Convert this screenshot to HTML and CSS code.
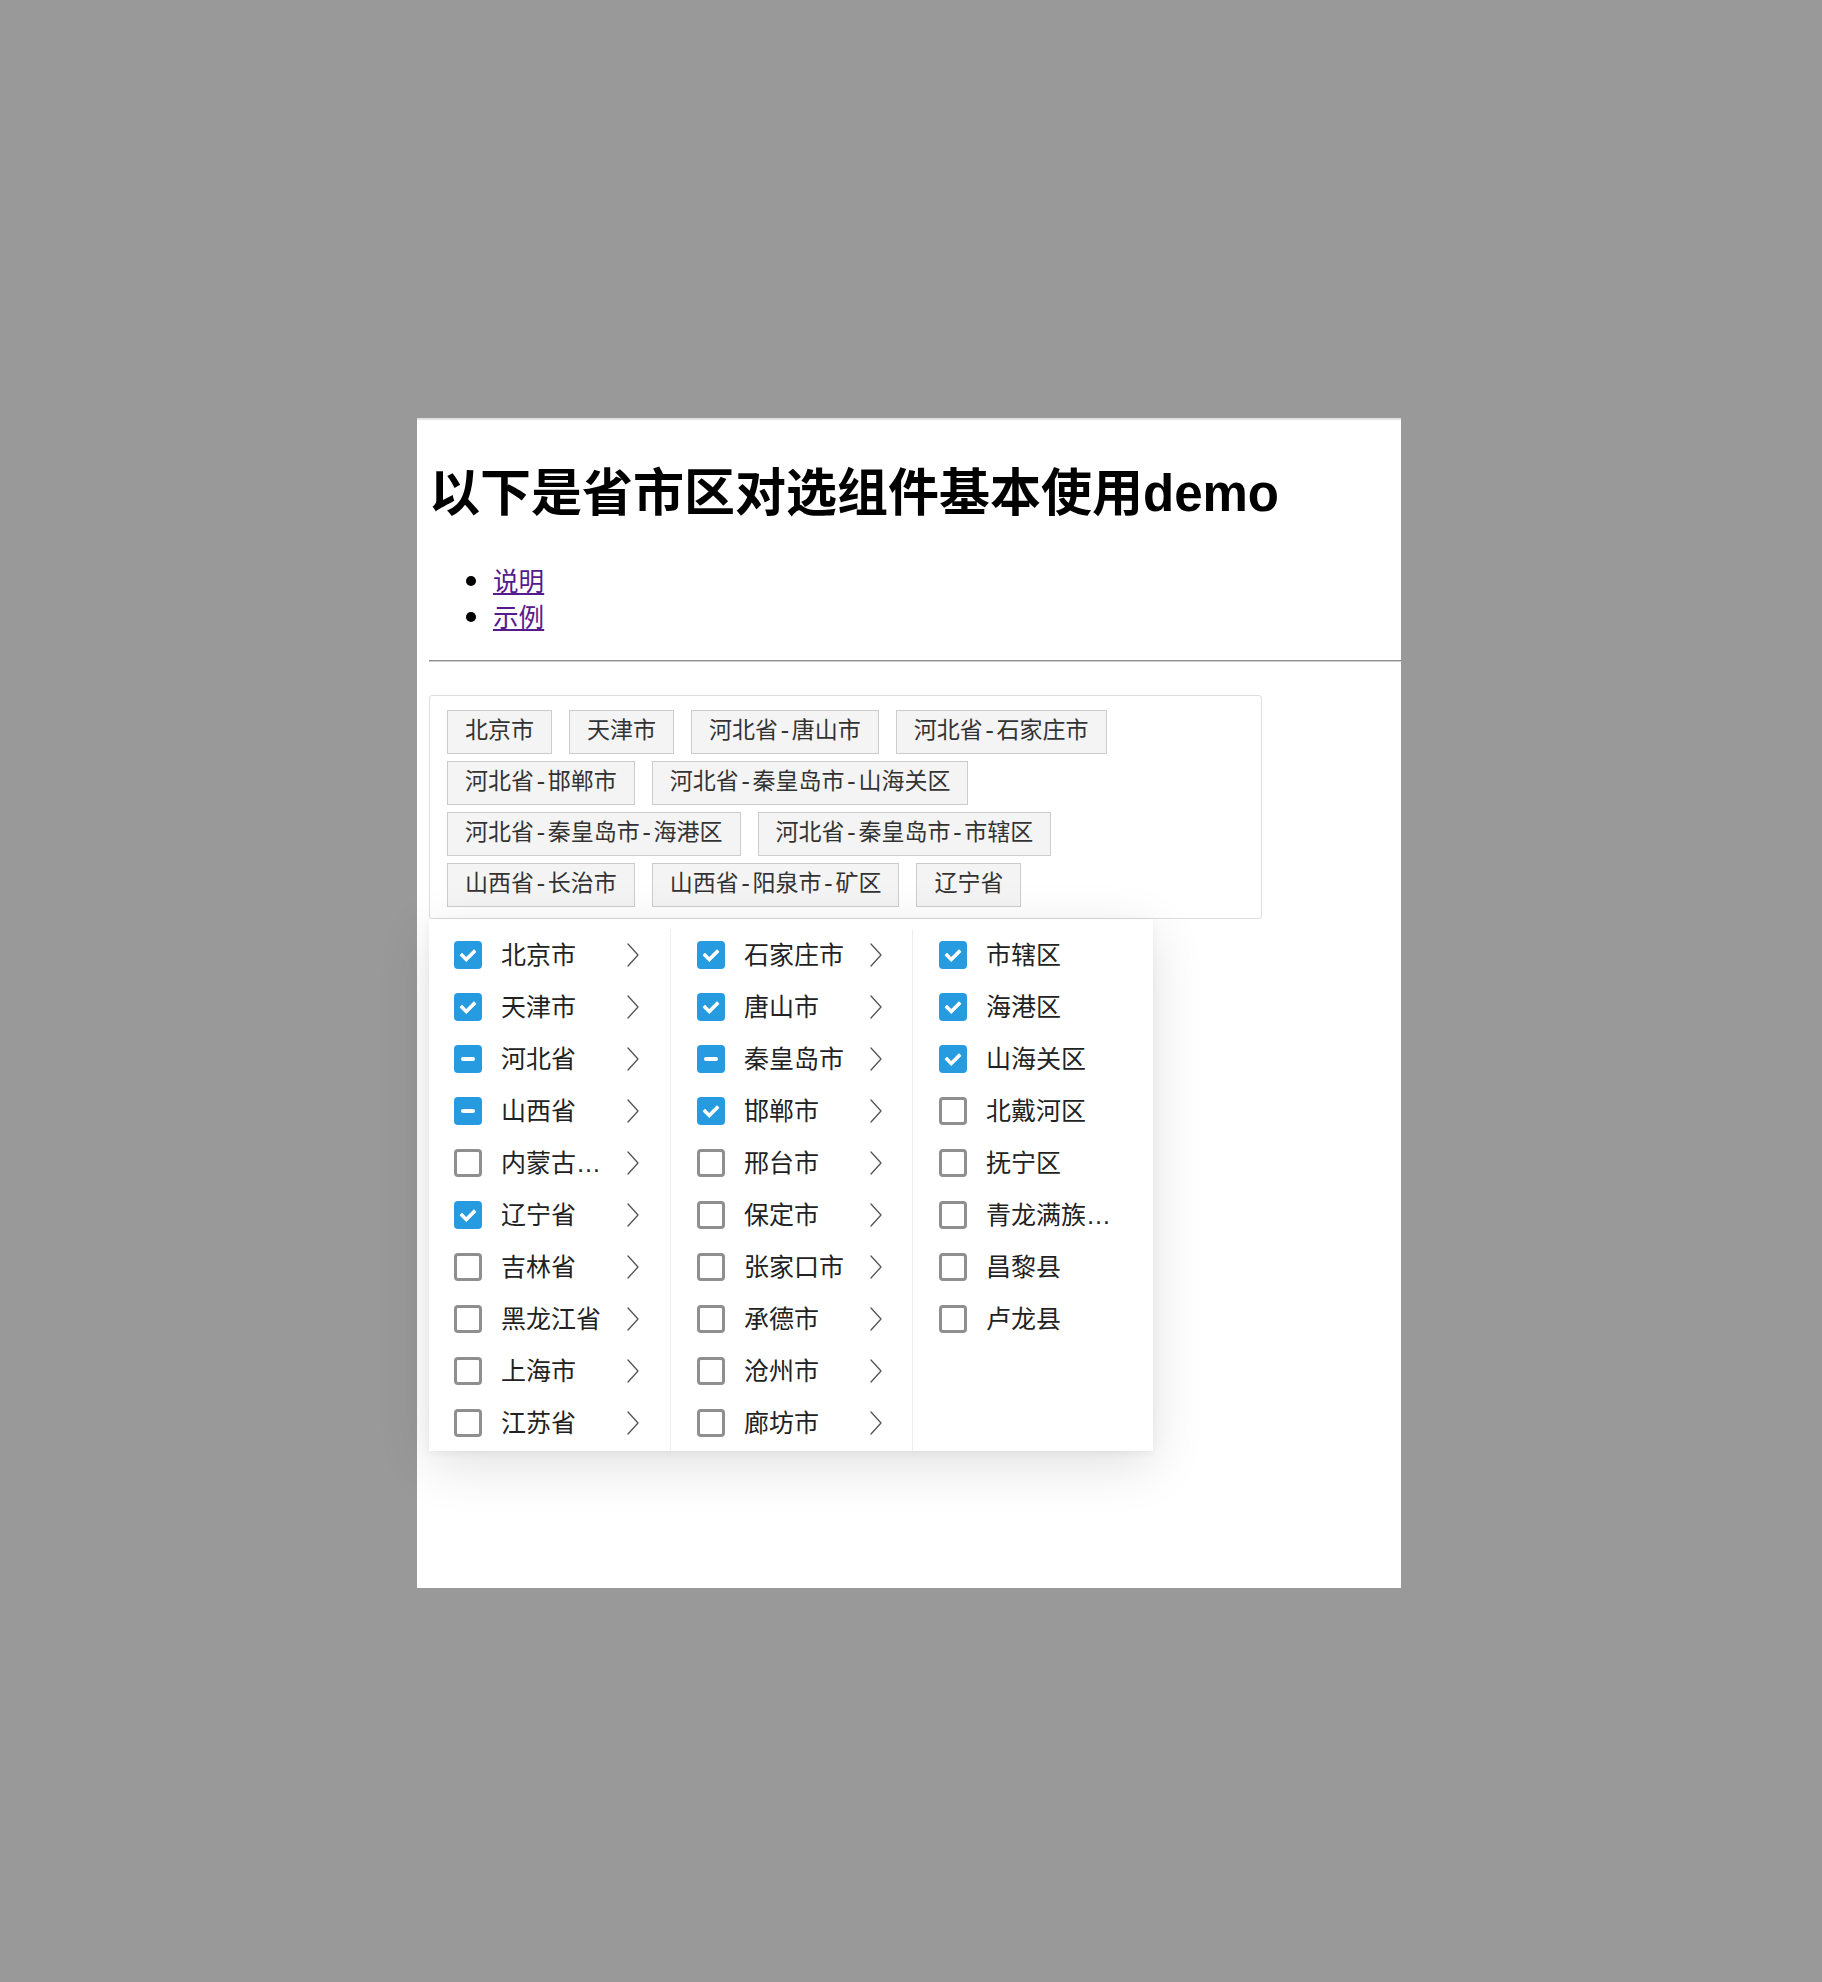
FILE: index.html
```html
<!DOCTYPE html>
<html lang="zh-CN">
<head>
<meta charset="utf-8">
<title>省市区对选组件 demo</title>
<link rel="stylesheet" href="styles.css">
</head>
<body>
<div class="panel">
  <div class="content">
    <h1>以下是省市区对选组件基本使用demo</h1>
    <ul class="links">
      <li><a href="#desc">说明</a></li>
      <li><a href="#demo">示例</a></li>
    </ul>
    <hr class="rule">
    <div class="picker">
      <div class="tags">
        <span class="tag">北京市</span>
        <span class="tag">天津市</span>
        <span class="tag">河北省-唐山市</span>
        <span class="tag">河北省-石家庄市</span>
        <span class="tag">河北省-邯郸市</span>
        <span class="tag">河北省-秦皇岛市-山海关区</span>
        <span class="tag">河北省-秦皇岛市-海港区</span>
        <span class="tag">河北省-秦皇岛市-市辖区</span>
        <span class="tag">山西省-长治市</span>
        <span class="tag">山西省-阳泉市-矿区</span>
        <span class="tag">辽宁省</span>
      </div>
      <div class="dropdown">
        <div class="col">
          <div class="row"><span class="cb on"></span><span class="label">北京市</span><svg class="chev" viewBox="0 0 12 24"><polyline points="1,1 11,12 1,23"/></svg></div>
          <div class="row"><span class="cb on"></span><span class="label">天津市</span><svg class="chev" viewBox="0 0 12 24"><polyline points="1,1 11,12 1,23"/></svg></div>
          <div class="row"><span class="cb half"></span><span class="label">河北省</span><svg class="chev" viewBox="0 0 12 24"><polyline points="1,1 11,12 1,23"/></svg></div>
          <div class="row"><span class="cb half"></span><span class="label">山西省</span><svg class="chev" viewBox="0 0 12 24"><polyline points="1,1 11,12 1,23"/></svg></div>
          <div class="row"><span class="cb off"></span><span class="label" title="内蒙古自治区">内蒙古…</span><svg class="chev" viewBox="0 0 12 24"><polyline points="1,1 11,12 1,23"/></svg></div>
          <div class="row"><span class="cb on"></span><span class="label">辽宁省</span><svg class="chev" viewBox="0 0 12 24"><polyline points="1,1 11,12 1,23"/></svg></div>
          <div class="row"><span class="cb off"></span><span class="label">吉林省</span><svg class="chev" viewBox="0 0 12 24"><polyline points="1,1 11,12 1,23"/></svg></div>
          <div class="row"><span class="cb off"></span><span class="label">黑龙江省</span><svg class="chev" viewBox="0 0 12 24"><polyline points="1,1 11,12 1,23"/></svg></div>
          <div class="row"><span class="cb off"></span><span class="label">上海市</span><svg class="chev" viewBox="0 0 12 24"><polyline points="1,1 11,12 1,23"/></svg></div>
          <div class="row"><span class="cb off"></span><span class="label">江苏省</span><svg class="chev" viewBox="0 0 12 24"><polyline points="1,1 11,12 1,23"/></svg></div>
        </div>
        <div class="col">
          <div class="row"><span class="cb on"></span><span class="label">石家庄市</span><svg class="chev" viewBox="0 0 12 24"><polyline points="1,1 11,12 1,23"/></svg></div>
          <div class="row"><span class="cb on"></span><span class="label">唐山市</span><svg class="chev" viewBox="0 0 12 24"><polyline points="1,1 11,12 1,23"/></svg></div>
          <div class="row"><span class="cb half"></span><span class="label">秦皇岛市</span><svg class="chev" viewBox="0 0 12 24"><polyline points="1,1 11,12 1,23"/></svg></div>
          <div class="row"><span class="cb on"></span><span class="label">邯郸市</span><svg class="chev" viewBox="0 0 12 24"><polyline points="1,1 11,12 1,23"/></svg></div>
          <div class="row"><span class="cb off"></span><span class="label">邢台市</span><svg class="chev" viewBox="0 0 12 24"><polyline points="1,1 11,12 1,23"/></svg></div>
          <div class="row"><span class="cb off"></span><span class="label">保定市</span><svg class="chev" viewBox="0 0 12 24"><polyline points="1,1 11,12 1,23"/></svg></div>
          <div class="row"><span class="cb off"></span><span class="label">张家口市</span><svg class="chev" viewBox="0 0 12 24"><polyline points="1,1 11,12 1,23"/></svg></div>
          <div class="row"><span class="cb off"></span><span class="label">承德市</span><svg class="chev" viewBox="0 0 12 24"><polyline points="1,1 11,12 1,23"/></svg></div>
          <div class="row"><span class="cb off"></span><span class="label">沧州市</span><svg class="chev" viewBox="0 0 12 24"><polyline points="1,1 11,12 1,23"/></svg></div>
          <div class="row"><span class="cb off"></span><span class="label">廊坊市</span><svg class="chev" viewBox="0 0 12 24"><polyline points="1,1 11,12 1,23"/></svg></div>
        </div>
        <div class="col last">
          <div class="row"><span class="cb on"></span><span class="label">市辖区</span></div>
          <div class="row"><span class="cb on"></span><span class="label">海港区</span></div>
          <div class="row"><span class="cb on"></span><span class="label">山海关区</span></div>
          <div class="row"><span class="cb off"></span><span class="label">北戴河区</span></div>
          <div class="row"><span class="cb off"></span><span class="label">抚宁区</span></div>
          <div class="row"><span class="cb off"></span><span class="label" title="青龙满族自治县">青龙满族…</span></div>
          <div class="row"><span class="cb off"></span><span class="label">昌黎县</span></div>
          <div class="row"><span class="cb off"></span><span class="label">卢龙县</span></div>
        </div>
      </div>
    </div>
  </div>
</div>
</body>
</html>
```
FILE: styles.css
```css
html, body {
  margin: 0;
}
body {
  background: #999999;
  padding: 418px 0 0 417px;
  min-height: 1982px;
  box-sizing: border-box;
  font-family: "Liberation Sans", "Noto Sans CJK SC", sans-serif;
  color: #000;
}
.panel {
  width: 984px;
  height: 1170px;
  box-sizing: border-box;
  background: #ffffff;
  border-top: 2px solid #e3e3e3;
}
.content {
  padding-left: 12px;
}
h1 {
  font-size: 51px;
  line-height: 74px;
  font-weight: bold;
  margin: 37px 0 0;
  white-space: nowrap;
}
.links {
  margin: 31px 0 0;
  padding-left: 64px;
  font-size: 25.6px;
  line-height: 36px;
  font-family: "Noto Sans CJK SC", sans-serif;
}
.links a {
  color: #551a8b;
  text-decoration: underline;
}
.rule {
  margin: 26px 0 0;
  height: 0;
  border: 0;
  border-top: 1px solid #8f8f8f;
  border-bottom: 1px solid #cfcfcf;
}
.picker {
  margin-top: 33px;
}
.tags {
  width: 833px;
  box-sizing: border-box;
  border: 1px solid #dddddd;
  border-radius: 3px;
  padding: 14px 17px 11px;
  display: flex;
  flex-wrap: wrap;
  gap: 7px 17px;
}
.tag {
  height: 44px;
  box-sizing: border-box;
  line-height: 42px;
  padding: 0 17px;
  border: 1px solid #cccccc;
  background: #f4f4f4;
  color: #333333;
  font-size: 23px;
  font-family: "Liberation Mono", "Noto Sans CJK SC", monospace;
  white-space: nowrap;
}
.dropdown {
  width: 724px;
  background: #ffffff;
  padding-top: 10px;
  display: grid;
  grid-template-columns: 241px 242px 241px;
  box-shadow: 0 14px 50px rgba(0, 0, 0, 0.12), 0 2px 8px rgba(0, 0, 0, 0.05);
  position: relative;
}
.col {
  padding: 0 0 2px 26px;
  border-left: 1px solid #eeeeee;
}
.col:first-child {
  padding-left: 25px;
  border-left: 0;
}
.row {
  height: 52px;
  display: flex;
  align-items: center;
}
.cb {
  flex: none;
  width: 28px;
  height: 28px;
  box-sizing: border-box;
  border-radius: 4px;
  margin-right: 19px;
  position: relative;
}
.cb.on, .cb.half {
  background: #279be0;
}
.cb.off {
  border: 3px solid #8f8f8f;
  background: #fff;
}
.cb.on::after {
  content: "";
  position: absolute;
  left: 9px;
  top: 5px;
  width: 6px;
  height: 11px;
  border-right: 4px solid #fff;
  border-bottom: 4px solid #fff;
  transform: rotate(45deg);
  border-radius: 1px;
}
.cb.half::after {
  content: "";
  position: absolute;
  left: 7px;
  top: 12px;
  width: 14px;
  height: 4px;
  border-radius: 2px;
  background: #fff;
}
.label {
  width: 110px;
  margin-right: 16px;
  font-size: 25px;
  line-height: 32px;
  color: #222222;
  white-space: nowrap;
}
.col.last .label {
  width: 130px;
}
.chev {
  flex: none;
  width: 12px;
  height: 24px;
}
.chev polyline {
  fill: none;
  stroke: #555555;
  stroke-width: 1.3;
  stroke-linecap: round;
  stroke-linejoin: round;
}
```
